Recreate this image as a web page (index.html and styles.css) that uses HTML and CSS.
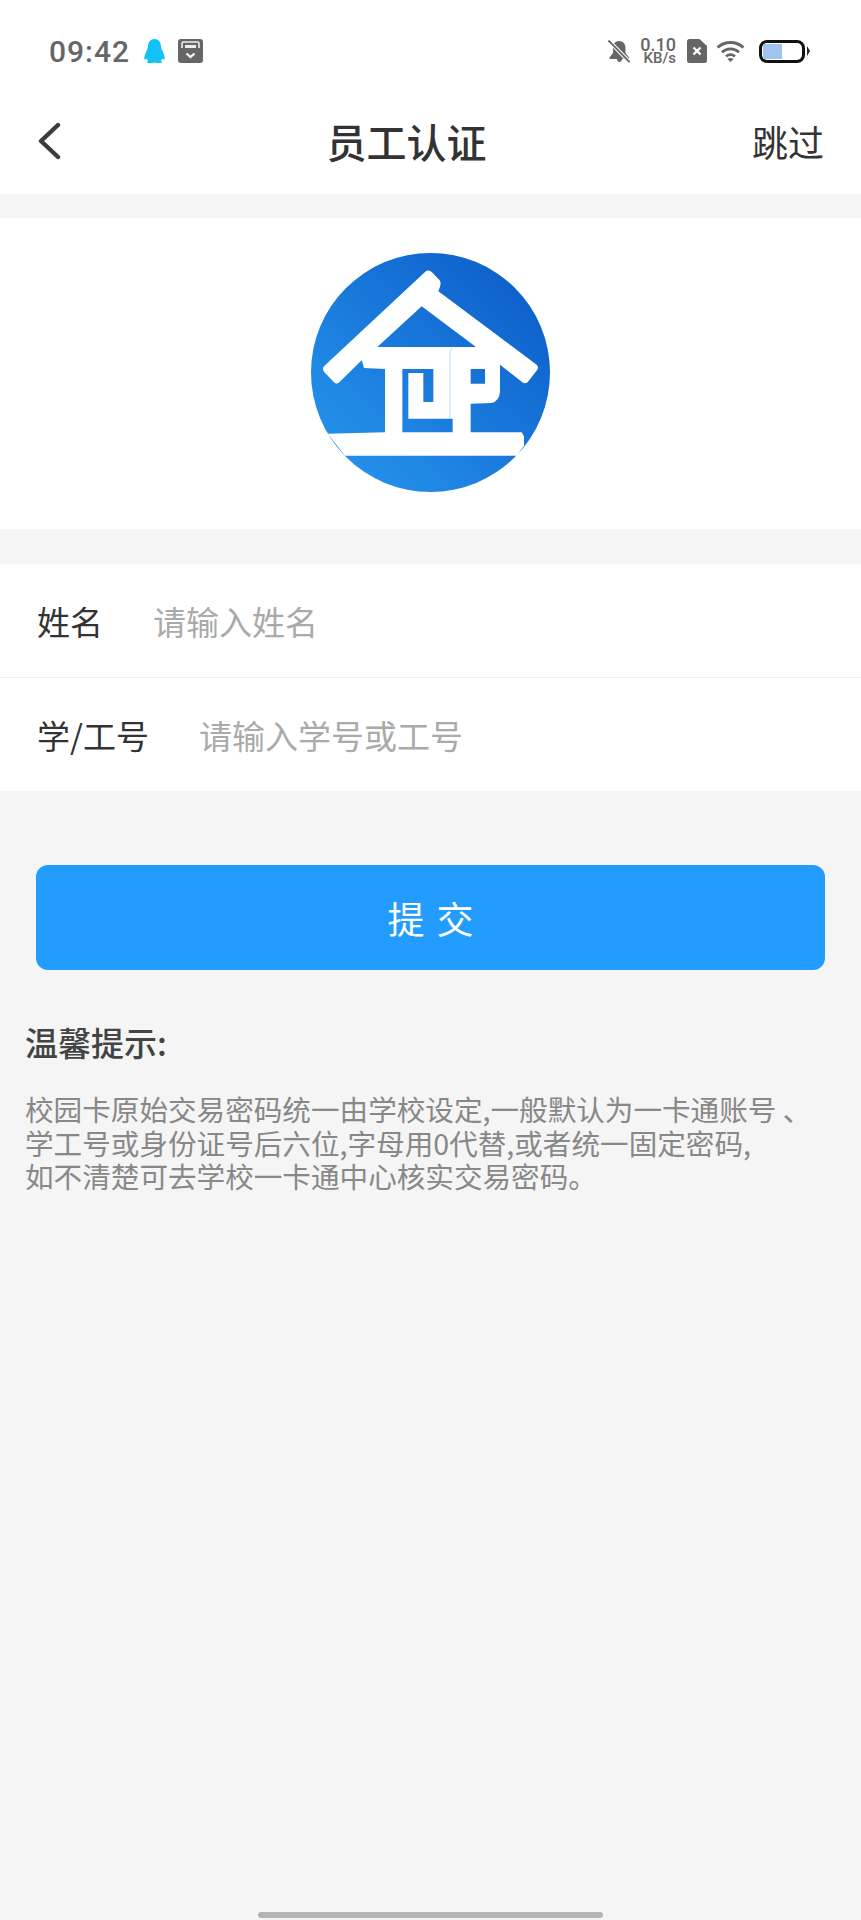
FILE: index.html
```html
<!DOCTYPE html>
<html>

<head>
    <title>员工认证</title>
    <link rel="stylesheet" href="styles.css">
</head>

<body>

<div class="header">
    <div class="status-bar">
        <div class="status-left">
            <span class="clock">09:42</span>
            <svg class="icon-qq" viewBox="0 0 21 24">
                <path d="M10.5 0C6.5 0 4.2 3 4 7C3.9 9 3.5 10 2.5 12C1 15 .2 18 .2 20C.5 21 1.6 20.6 2.6 19.4C3 20.6 3.6 21.4 4.4 22C3.4 22.4 3 23 3.4 24H8.4L10.5 23.4L12.6 24H17.6C18 23 17.6 22.4 16.6 22C17.4 21.4 18 20.6 18.4 19.4C19.4 20.6 20.5 21 20.8 20C20.8 18 20 15 18.5 12C17.5 10 17.1 9 17 7C16.8 3 14.5 0 10.5 0Z" fill="#12c1f5"/>
            </svg>
            <svg class="icon-box" viewBox="0 0 25 24">
                <rect x="0" y="0" width="25" height="24" rx="3" fill="#666"/>
                <path d="M4 9V4.5Q4 3 5.5 3H19.5Q21 3 21 4.5V9" fill="none" stroke="#eee" stroke-width="1.6"/>
                <rect x="7" y="6" width="11" height="3" fill="#eee"/>
                <path d="M8.5 14.5L12.5 18L16.5 14.5" fill="none" stroke="#fff" stroke-width="2.2"/>
            </svg>
        </div>
        <div class="status-right">
            <svg class="icon-bell" viewBox="0 0 22 23">
                <path d="M11 1C7 1 5 4 5 8V13L1.5 17.5V19H9C9 21 10 22 11.5 22C13 22 14 21 14 19H21V17.5L17.5 13V8C17.5 4 15 1 11 1Z" fill="#666"/>
                <path d="M0.5 0.5L21.5 22" stroke="#fff" stroke-width="4"/>
                <path d="M0.5 0.5L21.5 22" stroke="#666" stroke-width="1.8"/>
            </svg>
            <div class="net-speed">
                <span class="net-value">0.10</span>
                <span class="net-unit">KB/s</span>
            </div>
            <svg class="icon-sim" viewBox="0 0 20 24">
                <path d="M2.5 0H12.5L20 7V21.5Q20 24 17.5 24H2.5Q0 24 0 21.5V2.5Q0 0 2.5 0Z" fill="#666"/>
                <path d="M6.5 8.5L13.5 15.5M13.5 8.5L6.5 15.5" stroke="#fff" stroke-width="2.4"/>
            </svg>
            <svg class="icon-wifi" viewBox="0 0 29 22">
                <path d="M1.5 7.5C9 .8 20 .8 27.5 7.5" fill="none" stroke="#666" stroke-width="2.8"/>
                <path d="M6 12.2C11 7.8 18 7.8 23 12.2" fill="none" stroke="#666" stroke-width="2.8"/>
                <path d="M10 16.4C13 14 16 14 19 16.4" fill="none" stroke="#666" stroke-width="2.8"/>
                <path d="M14.5 22L11.4 19Q14.5 17 17.6 19Z" fill="#666"/>
            </svg>
            <div class="battery">
                <div class="battery-body">
                    <div class="battery-level"></div>
                </div>
                <div class="battery-nub"></div>
            </div>
        </div>
    </div>

    <div class="nav-bar">
        <svg class="icon-back" viewBox="0 0 24 38">
            <path d="M21 3L4 19L21 35" fill="none" stroke="#3c3c3c" stroke-width="4.4" stroke-linecap="round" stroke-linejoin="round"/>
        </svg>
        <div class="nav-title">员工认证</div>
        <div class="nav-skip">跳过</div>
    </div>
</div>

<div class="logo-box">
    <svg class="logo" viewBox="63 40 717 717">
        <defs>
            <linearGradient id="logo-blue" x1="0" y1="1" x2="1" y2="0">
                <stop offset="0" stop-color="#2899f0"/>
                <stop offset="1" stop-color="#0a58c6"/>
            </linearGradient>
        </defs>
        <circle cx="421.5" cy="398.5" r="358.5" fill="url(#logo-blue)"/>
        <!-- roof, T and P are one white shape with the blue holes cut out -->
        <path fill="#fff" fill-rule="evenodd" d="M102 380L405 97Q416 88 426 98L449 122Q456 132 445 155L740 375Q747 382 742 390L714 426Q706 435 697 428L630 375V455Q628 485 605 490L542 492V578H695L702 590V618L680 648H165L113 582L285 578V388L222 385L215 362L148 428Q140 435 132 428L102 396Q96 388 102 380Z
            M395 200L558 322H262Z
            M542 388H585V432H542Z
            M337 388H430V487H400V400H355V537H488V578H337Z"/>
        <path d="M486 326Q480 330 480 345V537" fill="none" stroke="#bcd8f5" stroke-width="3"/>
    </svg>
</div>

<div class="form">
    <div class="form-row">
        <span class="form-label">姓名</span>
        <span class="form-hint">请输入姓名</span>
    </div>
    <div class="form-row">
        <span class="form-label">学/工号</span>
        <span class="form-hint">请输入学号或工号</span>
    </div>
</div>

<div class="submit-button">提交</div>

<div class="tips">
    <div class="tips-title">温馨提示:</div>
    <div class="tips-text">校园卡原始交易密码统一由学校设定,一般默认为一卡通账号 、<br>学工号或身份证号后六位,字母用0代替,或者统一固定密码,<br>如不清楚可去学校一卡通中心核实交易密码。</div>
</div>

<div class="home-bar"></div>

</body>

</html>
```

FILE: styles.css
```css
body {
    margin: 0;
    height: 1920px;
    overflow: hidden;
    position: relative;
    background-color: #f5f5f5;
    font-family: "Noto Sans CJK SC", "Noto Sans", sans-serif;
}

.header {
    background-color: #ffffff;
}

.status-bar {
    height: 74px;
    padding: 14px 51px 0 49px;
    display: flex;
    align-items: center;
    justify-content: space-between;
}

.status-left,
.status-right {
    display: flex;
    align-items: center;
}

.clock {
    font-family: Roboto, sans-serif;
    font-size: 30px;
    font-weight: 500;
    letter-spacing: 1px;
    color: #666666;
}

.icon-qq {
    width: 21px;
    height: 24px;
    margin-left: 14px;
}

.icon-box {
    width: 25px;
    height: 24px;
    margin-left: 13px;
}

.icon-bell {
    width: 22px;
    height: 23px;
}

.net-speed {
    display: flex;
    flex-direction: column;
    align-items: flex-end;
    width: 36px;
    margin-left: 10px;
    font-family: Roboto, sans-serif;
    font-weight: 500;
    color: #666666;
}

.net-value {
    font-size: 18px;
    line-height: 15px;
}

.net-unit {
    font-size: 15px;
    line-height: 13px;
}

.icon-sim {
    width: 20px;
    height: 24px;
    margin-left: 11px;
}

.icon-wifi {
    width: 29px;
    height: 22px;
    margin-left: 9px;
}

.battery {
    display: flex;
    align-items: center;
    margin-left: 14px;
}

.battery-body {
    width: 46px;
    height: 23px;
    box-sizing: border-box;
    border: 3px solid #111111;
    border-radius: 8px;
    padding: 1px;
}

.battery-level {
    width: 19px;
    height: 100%;
    background-color: #a0c4ec;
}

.battery-nub {
    width: 0;
    height: 0;
    margin-left: 2px;
    border-left: 3px solid #222222;
    border-top: 5px solid transparent;
    border-bottom: 5px solid transparent;
}

.nav-bar {
    height: 106px;
    padding: 0 37px;
    display: flex;
    align-items: center;
    justify-content: space-between;
}

.icon-back {
    width: 24px;
    height: 38px;
}

.nav-title {
    font-size: 40px;
    font-weight: 500;
    color: #333333;
}

.nav-skip {
    font-size: 36px;
    color: #333333;
}

.logo-box {
    margin-top: 24px;
    padding: 35px 0 37px;
    display: flex;
    justify-content: center;
    background-color: #ffffff;
}

.logo {
    width: 239px;
    height: 239px;
}

.form {
    margin-top: 35px;
    background-color: #ffffff;
}

.form-row {
    height: 113px;
    padding-left: 37px;
    display: flex;
    align-items: center;
    gap: 50px;
    font-size: 33px;
}

.form-row + .form-row {
    border-top: 1px solid #eeeeee;
}

.form-label {
    color: #333333;
}

.form-hint {
    color: #aaaaaa;
}

.submit-button {
    height: 105px;
    margin: 74px 36px 0;
    display: flex;
    align-items: center;
    justify-content: center;
    border-radius: 12px;
    background-color: #229dff;
    color: #ffffff;
    font-size: 37px;
    letter-spacing: 12px;
    text-indent: 12px;
}

.tips {
    padding: 50px 25px 0;
}

.tips-title {
    font-size: 33px;
    font-weight: 500;
    line-height: 44px;
    color: #444444;
}

.tips-text {
    margin-top: 28px;
    font-size: 28.6px;
    line-height: 33.5px;
    color: #888888;
    white-space: nowrap;
}

.home-bar {
    position: absolute;
    left: 258px;
    bottom: 2px;
    width: 345px;
    height: 6px;
    border-radius: 3px;
    background-color: #b5b5b5;
}
```
